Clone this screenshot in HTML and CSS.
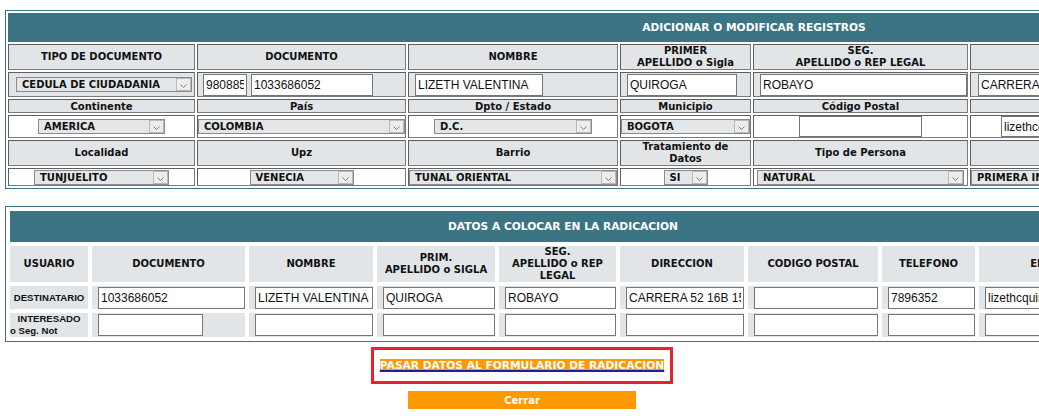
FILE: index.html
```html
<!DOCTYPE html>
<html lang="es">
<head>
<meta charset="utf-8">
<title>Adicionar o modificar registros</title>
<link rel="stylesheet" href="styles.css">
</head>
<body>
<div class="page">
  <table class="grid t1">
    <colgroup>
      <col class="a1"><col class="a2"><col class="a3"><col class="a4"><col class="a5"><col class="a6"><col class="a7">
    </colgroup>
    <tr class="h-title"><td colspan="7" class="title">ADICIONAR O MODIFICAR REGISTROS</td></tr>
    <tr class="h-head">
      <td class="hd">TIPO DE DOCUMENTO</td>
      <td class="hd">DOCUMENTO</td>
      <td class="hd">NOMBRE</td>
      <td class="hd">PRIMER<br>APELLIDO o Sigla</td>
      <td class="hd">SEG.<br>APELLIDO o REP LEGAL</td>
      <td class="hd">DIRECCION</td>
      <td class="hd">TELEFONO</td>
    </tr>
    <tr class="h-in">
      <td class="gi p7"><span class="sel w-ced"><span class="v">CEDULA DE CIUDADANIA</span><span class="b"><svg width="7" height="4" viewBox="0 0 7 4"><path d="M0.5 0.5 L3.5 3.5 L6.5 0.5" fill="none" stroke="#7d7d7d"/></svg></span></span></td>
      <td class="gi p5"><input class="in w-44" value="980885"><input class="in w-122 ml4" value="1033686052"></td>
      <td class="gi"><input class="in w-128" value="LIZETH VALENTINA"></td>
      <td class="gi"><input class="in w-110" value="QUIROGA"></td>
      <td class="gi"><input class="in w-207" value="ROBAYO"></td>
      <td class="gi p7"><input class="in w-207" value="CARRERA 52 16B 15 SUR"></td>
      <td class="gi"><input class="in w-110" value="7896352"></td>
    </tr>
    <tr class="h-lab">
      <td class="lb">Continente</td>
      <td class="lb">País</td>
      <td class="lb">Dpto / Estado</td>
      <td class="lb">Municipio</td>
      <td class="lb">Código Postal</td>
      <td class="lb">Email</td>
      <td class="lb">Celular</td>
    </tr>
    <tr class="h-sel">
      <td class="wc"><span class="sel w-ame"><span class="v">AMERICA</span><span class="b"><svg width="7" height="4" viewBox="0 0 7 4"><path d="M0.5 0.5 L3.5 3.5 L6.5 0.5" fill="none" stroke="#7d7d7d"/></svg></span></span></td>
      <td class="wc"><span class="sel w-col"><span class="v">COLOMBIA</span><span class="b"><svg width="7" height="4" viewBox="0 0 7 4"><path d="M0.5 0.5 L3.5 3.5 L6.5 0.5" fill="none" stroke="#7d7d7d"/></svg></span></span></td>
      <td class="wc"><span class="sel w-dc"><span class="v">D.C.</span><span class="b"><svg width="7" height="4" viewBox="0 0 7 4"><path d="M0.5 0.5 L3.5 3.5 L6.5 0.5" fill="none" stroke="#7d7d7d"/></svg></span></span></td>
      <td class="wc"><span class="sel w-bog"><span class="v">BOGOTA</span><span class="b"><svg width="7" height="4" viewBox="0 0 7 4"><path d="M0.5 0.5 L3.5 3.5 L6.5 0.5" fill="none" stroke="#7d7d7d"/></svg></span></span></td>
      <td class="wc"><input class="in tall w-123" value=""></td>
      <td class="wc"><input class="in tall w-202" value="lizethcquiroga@hotmail.com"></td>
      <td class="wc"><input class="in tall w-202" value="3124567890"></td>
    </tr>
    <tr class="h-lab2">
      <td class="lb">Localidad</td>
      <td class="lb">Upz</td>
      <td class="lb">Barrio</td>
      <td class="lb">Tratamiento de<br>Datos</td>
      <td class="lb">Tipo de Persona</td>
      <td class="lb">Grupo Poblacional</td>
      <td class="lb">Estrato</td>
    </tr>
    <tr class="h-last">
      <td class="wc"><span class="sel w-tun"><span class="v">TUNJUELITO</span><span class="b"><svg width="7" height="4" viewBox="0 0 7 4"><path d="M0.5 0.5 L3.5 3.5 L6.5 0.5" fill="none" stroke="#7d7d7d"/></svg></span></span></td>
      <td class="wc"><span class="sel w-ven"><span class="v">VENECIA</span><span class="b"><svg width="7" height="4" viewBox="0 0 7 4"><path d="M0.5 0.5 L3.5 3.5 L6.5 0.5" fill="none" stroke="#7d7d7d"/></svg></span></span></td>
      <td class="wc"><span class="sel w-tor"><span class="v">TUNAL ORIENTAL</span><span class="b"><svg width="7" height="4" viewBox="0 0 7 4"><path d="M0.5 0.5 L3.5 3.5 L6.5 0.5" fill="none" stroke="#7d7d7d"/></svg></span></span></td>
      <td class="wc"><span class="sel w-si"><span class="v">SI</span><span class="b"><svg width="7" height="4" viewBox="0 0 7 4"><path d="M0.5 0.5 L3.5 3.5 L6.5 0.5" fill="none" stroke="#7d7d7d"/></svg></span></span></td>
      <td class="wc"><span class="sel w-nat"><span class="v">NATURAL</span><span class="b"><svg width="7" height="4" viewBox="0 0 7 4"><path d="M0.5 0.5 L3.5 3.5 L6.5 0.5" fill="none" stroke="#7d7d7d"/></svg></span></span></td>
      <td class="wc"><span class="sel w-pri"><span class="v">PRIMERA INFANCIA</span><span class="b"><svg width="7" height="4" viewBox="0 0 7 4"><path d="M0.5 0.5 L3.5 3.5 L6.5 0.5" fill="none" stroke="#7d7d7d"/></svg></span></span></td>
      <td class="wc"><span class="sel w-pri"><span class="v">3</span><span class="b"><svg width="7" height="4" viewBox="0 0 7 4"><path d="M0.5 0.5 L3.5 3.5 L6.5 0.5" fill="none" stroke="#7d7d7d"/></svg></span></span></td>
    </tr>
  </table>

  <table class="grid t2">
    <colgroup>
      <col class="b1"><col class="b2"><col class="b3"><col class="b4"><col class="b5"><col class="b6"><col class="b7"><col class="b8"><col class="b9">
    </colgroup>
    <tr class="k-title"><td colspan="9" class="title">DATOS A COLOCAR EN LA RADICACION</td></tr>
    <tr class="k-head">
      <td class="hd2">USUARIO</td>
      <td class="hd2">DOCUMENTO</td>
      <td class="hd2">NOMBRE</td>
      <td class="hd2">PRIM.<br>APELLIDO o SIGLA</td>
      <td class="hd2">SEG.<br>APELLIDO o REP<br>LEGAL</td>
      <td class="hd2">DIRECCION</td>
      <td class="hd2">CODIGO POSTAL</td>
      <td class="hd2">TELEFONO</td>
      <td class="hd2">EMAIL</td>
    </tr>
    <tr class="k-row">
      <td class="rl">DESTINATARIO</td>
      <td class="ci"><input class="in full" value="1033686052"></td>
      <td class="ci"><input class="in full" value="LIZETH VALENTINA"></td>
      <td class="ci"><input class="in full" value="QUIROGA"></td>
      <td class="ci"><input class="in full" value="ROBAYO"></td>
      <td class="ci"><input class="in full" value="CARRERA 52 16B 15 SUR"></td>
      <td class="ci"><input class="in full" value=""></td>
      <td class="ci"><input class="in full" value="7896352"></td>
      <td class="ci"><input class="in full" value="lizethcquiroga@hotmail.com"></td>
    </tr>
    <tr class="k-row">
      <td class="rl rl2"><span class="l1">INTERESADO</span><span class="l2">o Seg. Not</span></td>
      <td class="ci"><input class="in w-105" value=""></td>
      <td class="ci"><input class="in full" value=""></td>
      <td class="ci"><input class="in full" value=""></td>
      <td class="ci"><input class="in full" value=""></td>
      <td class="ci"><input class="in full" value=""></td>
      <td class="ci"><input class="in full" value=""></td>
      <td class="ci"><input class="in full" value=""></td>
      <td class="ci"><input class="in full" value=""></td>
    </tr>
  </table>

  <div class="actions">
    <div class="hl"><a href="#" class="pass">PASAR DATOS AL FORMULARIO DE RADICACION</a></div>
    <button class="close" type="button">Cerrar</button>
  </div>
</div>
</body>
</html>
```
FILE: styles.css
```css
html, body { margin: 0; padding: 0; background: #fff; }
body { font-family: "DejaVu Sans", Verdana, sans-serif; color: #111; }
.page { width: 1039px; overflow: hidden; box-sizing: border-box; padding: 10px 0 0 5px; }

.grid {
  table-layout: fixed;
  border-collapse: separate;
  border: 1px solid #3b7482;
  box-sizing: border-box;
}
.grid td { box-sizing: border-box; padding: 0; }

.t1 { width: 1498px; border-spacing: 2px; }
.a1 { width: 187px; } .a2 { width: 209px; } .a3 { width: 210px; } .a4 { width: 131px; }
.a5 { width: 215px; } .a6 { width: 264px; } .a7 { width: 264px; }

.t2 { width: 1116px; border-spacing: 4px; margin-top: 17px; }
.b1 { width: 78px; } .b2 { width: 153px; } .b3 { width: 124px; } .b4 { width: 118px; }
.b5 { width: 117px; } .b6 { width: 124px; } .b7 { width: 130px; } .b8 { width: 93px; } .b9 { width: 137px; }

.title {
  background: #3b7482;
  color: #fff;
  font-weight: bold;
  font-size: 10.67px;
  text-align: center;
}
.h-title td { height: 29px; }
.k-title td { height: 31px; }

.t1 td:not(.title) {
  border: 1px solid #7b7b7b;
  border-top-color: #5f5f5f;
  border-left-color: #5f5f5f;
}
.hd, .lb {
  background: #e1e5e8;
  font-weight: bold;
  font-size: 10px;
  line-height: 12px;
  text-align: center;
}
.h-head td { height: 26px; }
.h-in td { height: 25px; }
.h-lab td { height: 14px; line-height: 11px; }
.h-sel td { height: 23px; }
.h-lab2 td { height: 26px; }
.h-last td { height: 18px; }

.gi { background: #e1e5e8; padding-left: 6px !important; text-align: left; white-space: nowrap; overflow: hidden; font-size: 0; line-height: 0; }
.gi.p7 { padding-left: 7px !important; }
.gi.p5 { padding-left: 5px !important; }
.wc { background: #fff; text-align: center; white-space: nowrap; overflow: hidden; font-size: 0; line-height: 0; }

.in {
  box-sizing: border-box;
  height: 22px;
  margin: 0;
  padding: 0 2px;
  border: 1px solid #767676;
  background: #fff;
  font-family: "Liberation Sans", Arial, sans-serif;
  font-size: 12px;
  line-height: normal;
  color: #111;
  vertical-align: middle;
  outline: none;
}
.in.tall { height: 21px; }
.ml4 { margin-left: 4px; }
.w-44 { width: 44px; } .w-122 { width: 122px; } .w-128 { width: 128px; } .w-110 { width: 110px; }
.w-207 { width: 207px; } .w-123 { width: 123px; } .w-202 { width: 202px; } .w-105 { width: 105px; }
.full { width: 100%; }

.sel {
  display: inline-flex;
  align-items: stretch;
  box-sizing: border-box;
  height: 15px;
  border: 1px solid #8a8a8a;
  background: #e3e7ea;
  font-weight: bold;
  font-size: 10px;
  color: #111;
  vertical-align: middle;
  text-align: left;
}
.sel .v { flex: 1; min-width: 0; padding-left: 5px; line-height: 13px; white-space: nowrap; overflow: hidden; }
.sel .b {
  flex: 0 0 15px;
  box-sizing: border-box;
  border: 1px solid #b9b9b9;
  background: #ededed;
  display: flex;
  align-items: flex-end;
  justify-content: center;
  padding-bottom: 2px;
}
.sel .b svg { display: block; }
.w-ced { width: 176px; } .w-ame { width: 127px; } .w-col { width: 207px; } .w-dc { width: 158px; }
.w-bog { width: 129px; } .w-tun { width: 135px; } .w-ven { width: 104px; } .w-tor { width: 208px; }
.w-si { width: 44px; } .w-nat { width: 207px; } .w-pri { width: 262px; }

.hd2 {
  background: #e1e5e8;
  font-weight: bold;
  font-size: 10px;
  line-height: 12px;
  text-align: center;
}
.k-head td { height: 36px; }
.k-row td { height: 23px; }
.ci { background: #e1e5e8; padding-left: 6px !important; white-space: nowrap; font-size: 0; line-height: 0; }
.rl {
  background: #e1e5e8;
  font-family: "Liberation Sans", Arial, sans-serif;
  font-weight: bold;
  font-size: 9.6px;
  line-height: 12px;
  text-align: center;
  white-space: nowrap;
}
.rl2 .l1 { display: block; text-align: center; }
.rl2 .l2 { display: block; text-align: left; }

.actions { display: flex; flex-direction: column; align-items: center; padding-top: 5px; }
.hl {
  box-sizing: border-box;
  width: 302px;
  height: 37px;
  border: 3px solid #e8212b;
  display: flex;
  align-items: center;
  justify-content: center;
}
.pass {
  background: #ff9900;
  color: #fff;
  font-weight: bold;
  font-size: 10.67px;
  line-height: 13px;
  text-decoration: underline;
  text-decoration-color: #1c1ca8;
  text-decoration-thickness: 2px;
  text-underline-offset: 1px;
  white-space: nowrap;
}
.close {
  margin-top: 7px;
  width: 228px;
  height: 18px;
  border: 0;
  padding: 0;
  background: #ff9900;
  color: #fff;
  font-family: "DejaVu Sans", Verdana, sans-serif;
  font-weight: bold;
  font-size: 10px;
}
```
